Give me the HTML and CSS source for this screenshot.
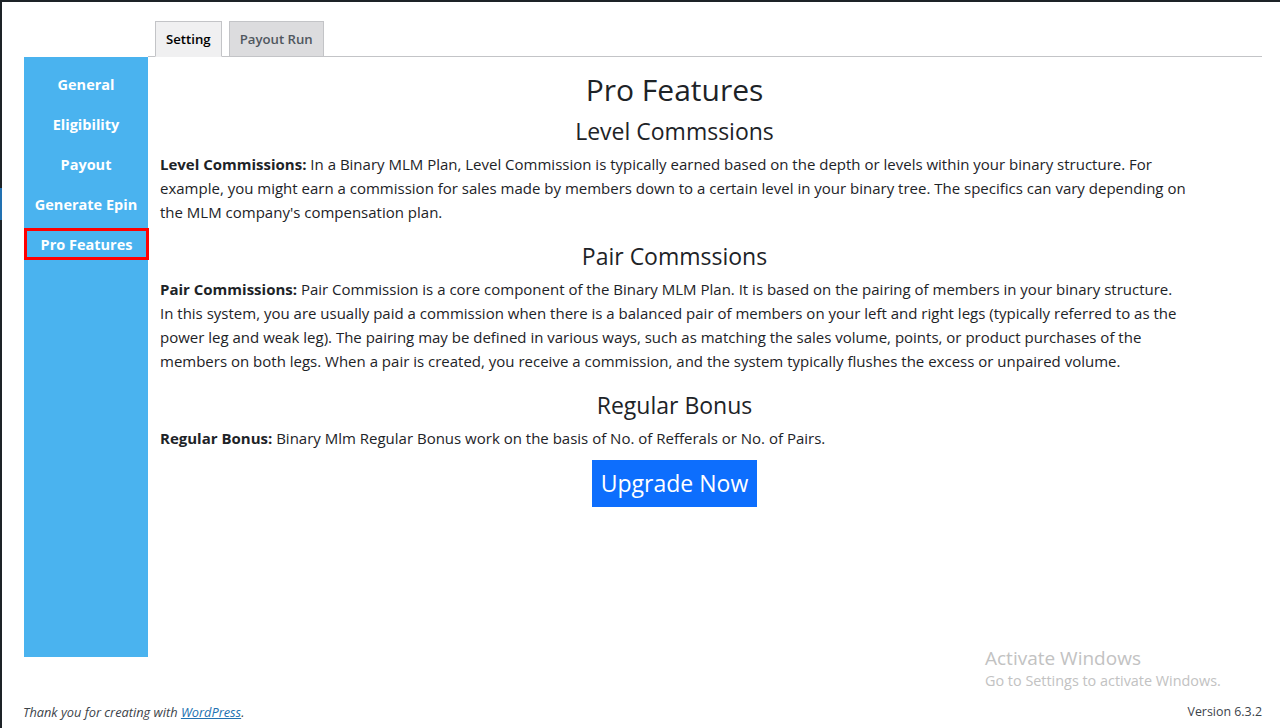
FILE: index.html
```html
<!DOCTYPE html>
<html lang="en">
<head>
<meta charset="utf-8">
<title>Pro Features</title>
<link rel="stylesheet" href="styles.css">
</head>
<body>
<div class="frame">
  <div class="adminbar-edge"><span class="edge-current"></span></div>
  <div class="page">
    <div class="wrap">
      <div class="tabs-row">
        <nav class="tabs">
          <a class="tab tab-active">Setting</a>
          <a class="tab">Payout Run</a>
        </nav>
      </div>
      <div class="main">
        <aside class="sidebar">
          <a class="side-item">General</a>
          <a class="side-item">Eligibility</a>
          <a class="side-item">Payout</a>
          <a class="side-item">Generate Epin</a>
          <a class="side-item side-active">Pro Features</a>
        </aside>
        <section class="content">
          <h1 class="title">Pro Features</h1>
          <h2 class="subtitle">Level Commssions</h2>
          <p class="text"><strong>Level Commissions:</strong> In a Binary MLM Plan, Level Commission is typically earned based on the depth or levels within your binary structure. For example, you might earn a commission for sales made by members down to a certain level in your binary tree. The specifics can vary depending on the MLM company's compensation plan.</p>
          <h2 class="subtitle">Pair Commssions</h2>
          <p class="text"><strong>Pair Commissions:</strong> Pair Commission is a core component of the Binary MLM Plan. It is based on the pairing of members in your binary structure. In this system, you are usually paid a commission when there is a balanced pair of members on your left and right legs (typically referred to as the power leg and weak leg). The pairing may be defined in various ways, such as matching the sales volume, points, or product purchases of the members on both legs. When a pair is created, you receive a commission, and the system typically flushes the excess or unpaired volume.</p>
          <h2 class="subtitle">Regular Bonus</h2>
          <p class="text text-last"><strong>Regular Bonus:</strong> Binary Mlm Regular Bonus work on the basis of No. of Refferals or No. of Pairs.</p>
          <div class="btn-row"><a class="upgrade">Upgrade Now</a></div>
        </section>
      </div>
    </div>
    <div class="watermark">
      <div class="wm-title">Activate Windows</div>
      <div class="wm-sub">Go to Settings to activate Windows.</div>
    </div>
    <footer class="footer">
      <span class="thanks">Thank you for creating with <a class="wp-link">WordPress</a>.</span>
      <span class="version">Version 6.3.2</span>
    </footer>
  </div>
</div>
</body>
</html>
```

FILE: styles.css
```css
* { box-sizing: border-box; }
html, body { margin: 0; padding: 0; }
body {
  background: #fff;
  font-family: "Open Sans", "Noto Sans", sans-serif;
  color: #1d2327;
  width: 1280px;
  height: 728px;
  overflow: hidden;
}
.frame {
  display: flex;
  height: 728px;
  border-top: 2px solid #1d2327;
}
.adminbar-edge {
  width: 2px;
  background: #1d2327;
  flex: none;
  position: relative;
}
.edge-current {
  position: absolute;
  left: 0;
  top: 186px;
  width: 2px;
  height: 32px;
  background: #2271b1;
}
.page {
  flex: 1;
  display: flex;
  flex-direction: column;
  position: relative;
  padding-left: 22px;
  padding-right: 18px;
}
.wrap { padding-top: 20px; }
.tabs-row {
  margin-left: 124px;
  border-bottom: 1px solid #c3c4c7;
  padding-left: 7px;
  height: 35px;
  display: flex;
  align-items: flex-end;
}
.tabs { display: flex; gap: 7px; margin-bottom: -1px; }
.tab {
  display: block;
  font-size: 13.2px;
  font-weight: 600;
  line-height: 24px;
  padding: 5px 10px;
  border: 1px solid #c3c4c7;
  background: #dcdcde;
  color: #50575e;
}
.tab-active {
  background: #f0f0f1;
  color: #000;
  border-bottom-color: #f0f0f1;
}
.main { display: flex; }
.sidebar {
  width: 124px;
  height: 600px;
  background: #4ab3ef;
  display: flex;
  flex-direction: column;
  gap: 8px;
  padding-top: 11px;
  flex: none;
}
.side-item {
  display: flex;
  align-items: center;
  justify-content: center;
  height: 32px;
  color: #fff;
  font-weight: 700;
  font-size: 14.5px;
}
.side-active {
  border: 3px solid #ff0000;
  width: 125px;
}
.content {
  width: 1041px;
  padding-left: 12px;
  text-align: left;
}
.title {
  text-align: center;
  font-size: 30px;
  font-weight: 500;
  margin: 13px 0 6px;
  line-height: 40px;
}
.subtitle {
  text-align: center;
  font-size: 23px;
  font-weight: 500;
  margin: 0 0 6px;
  line-height: 30px;
}
.text {
  font-size: 15px;
  line-height: 24px;
  margin: 0 0 17px;
}
.text-last { margin-bottom: 10px; }
.text strong { font-weight: 700; }
.btn-row { display: flex; justify-content: center; }
.upgrade {
  background: #0d6efd;
  color: #fff;
  font-size: 23px;
  line-height: 47px;
  padding: 0 9px;
}
.watermark {
  position: absolute;
  left: 983px;
  top: 644px;
  color: #c2c2c2;
}
.wm-title { font-size: 19px; line-height: 24px; }
.wm-sub { font-size: 14.4px; line-height: 22px; }
.footer {
  margin-top: auto;
  display: flex;
  justify-content: space-between;
  font-size: 12.8px;
  line-height: 20px;
  padding-bottom: 6px;
  color: #3c434a;
  margin-left: -1px;
}
.thanks { font-style: italic; }
.wp-link { color: #2271b1; text-decoration: underline; }
.version { color: #3c434a; font-size: 12.4px; }
```
